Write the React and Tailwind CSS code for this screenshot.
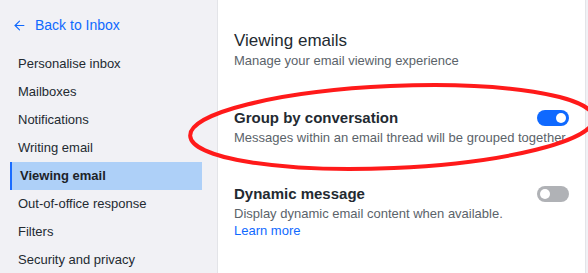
import { ArrowLeft } from 'lucide-react'

const items = [
  'Personalise inbox',
  'Mailboxes',
  'Notifications',
  'Writing email',
  'Viewing email',
  'Out-of-office response',
  'Filters',
  'Security and privacy',
]

function Toggle({ on }) {
  return (
    <div className={on ? 'w-8 h-4 rounded-full bg-[#0f69ff] flex items-center justify-end pr-[3px]' : 'w-8 h-4 rounded-full bg-[#b0b2b6] flex items-center pl-[3px]'}>
      <div className="w-[10px] h-[10px] rounded-full bg-white" />
    </div>
  )
}

export default function App() {
  return (
    <div className="relative w-[588px] h-[273px] overflow-hidden flex bg-[#f1f1f5] text-[#232a31]" style={{ fontFamily: '"Liberation Sans", Arial, sans-serif' }}>
      {/* sidebar */}
      <div className="w-[217px] shrink-0 pt-[17px]">
        <div className="flex items-center gap-[8px] pl-[12px] text-[#0f69ff] text-[14px] h-[16px]">
          <ArrowLeft className="w-[15px] h-[15px]" strokeWidth={1.75} />
          <span>Back to Inbox</span>
        </div>
        <div className="mt-[17px] flex flex-col">
          {items.map(item => item === 'Viewing email' ? (
            <div key={item} className="ml-[10px] w-[192px] h-[28px] bg-[#aed0f8] border-l-[2px] border-[#1a6cff] pl-[8px] flex items-center text-[13px] font-bold text-[#1d2228]">{item}</div>
          ) : (
            <div key={item} className="h-[28px] pl-[18px] flex items-center text-[13px]">{item}</div>
          ))}
        </div>
      </div>

      {/* content */}
      <div className="w-[369px] shrink-0 bg-white border-l border-r border-[#e3e4e8] pl-[16px] pr-[16px] pt-[31px]">
        <div className="text-[17px] leading-[20px]">Viewing emails</div>
        <div className="text-[13px] leading-[16px] text-[#5b636a] mt-[2px]">Manage your email viewing experience</div>

        <div className="mt-[40px] flex justify-between items-start">
          <div className="text-[15px] font-bold leading-[18px]">Group by conversation</div>
          <div className="mt-[1px]"><Toggle on /></div>
        </div>
        <div className="text-[13px] leading-[16px] text-[#5b636a] mt-[3px] whitespace-nowrap">Messages within an email thread will be grouped together</div>

        <div className="mt-[39px] flex justify-between items-start">
          <div className="text-[15px] font-bold leading-[18px]">Dynamic message</div>
          <div className="mt-[1px]"><Toggle /></div>
        </div>
        <div className="text-[13px] leading-[16px] text-[#5b636a] mt-[3px]">Display dynamic email content when available.</div>
        <div className="text-[13px] leading-[16px] text-[#0f69ff] mt-[1px]">Learn more</div>
      </div>

      {/* red annotation */}
      <svg className="absolute inset-0 pointer-events-none" width="588" height="273">
        <ellipse cx="392" cy="127" rx="202" ry="41" transform="rotate(-2.5 392 127)" fill="none" stroke="#ff1a1a" strokeWidth="4" />
      </svg>
    </div>
  )
}
